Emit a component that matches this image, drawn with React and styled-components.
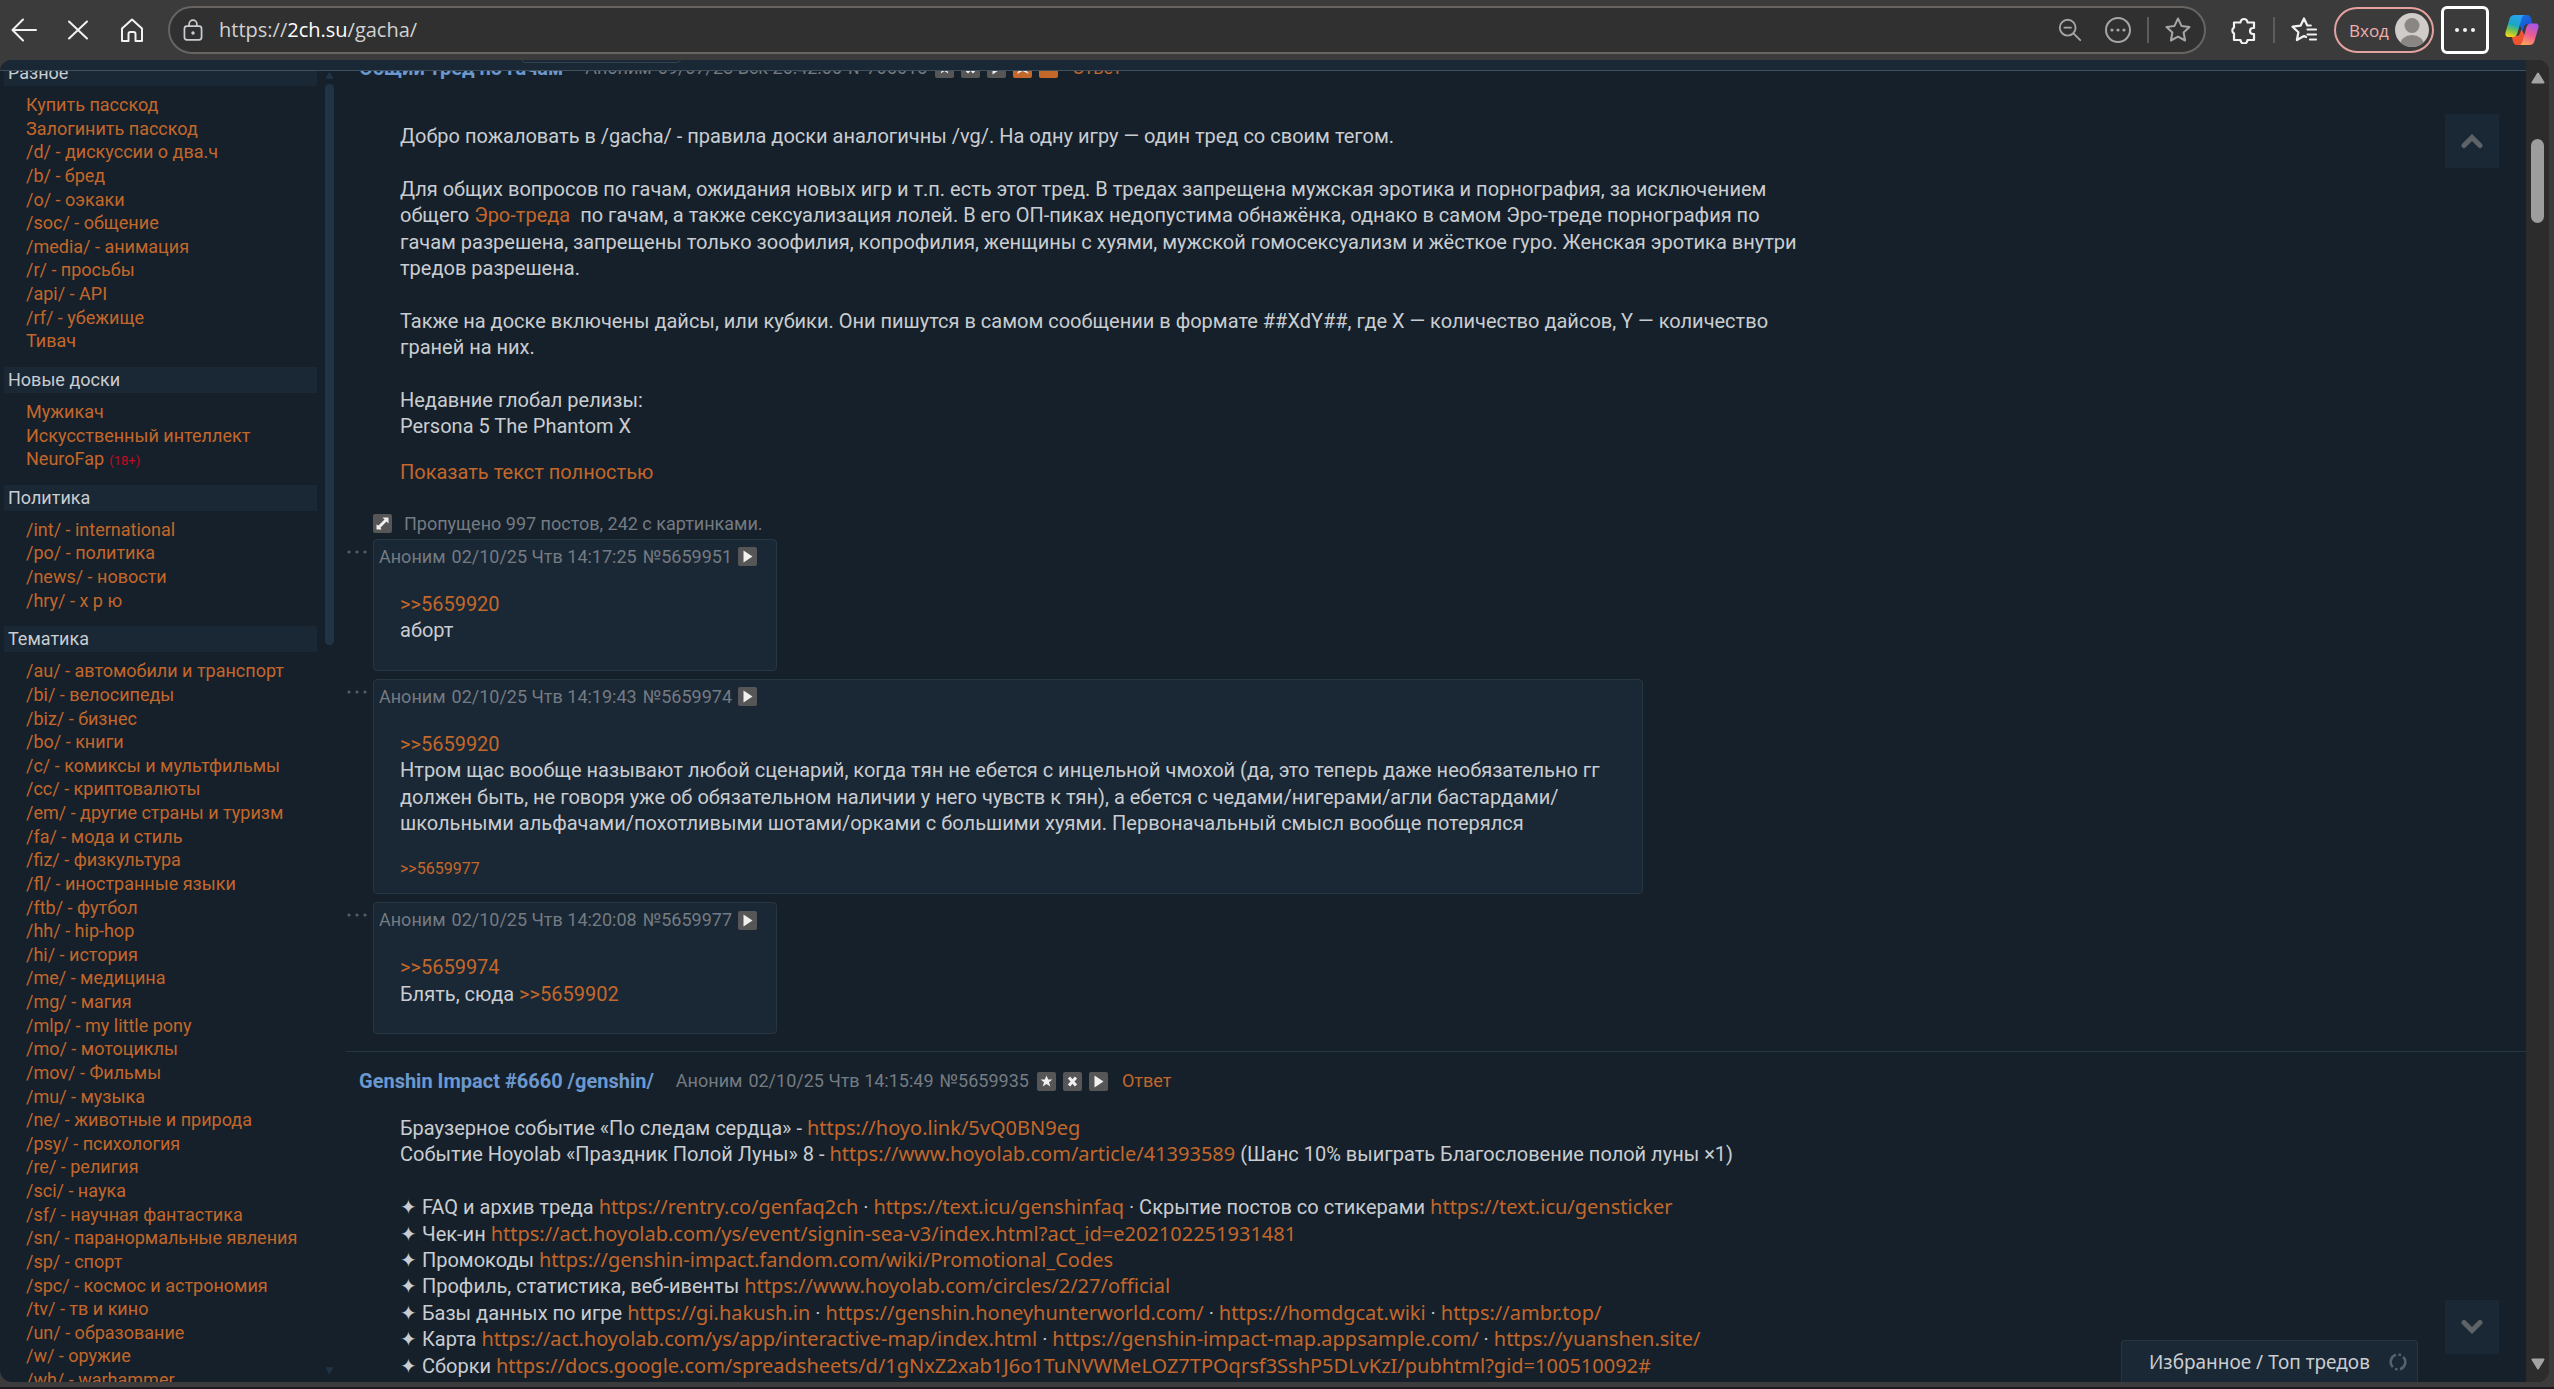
import React from "react";
import styled, { createGlobalStyle, css } from "styled-components";

const GlobalStyle = createGlobalStyle`
  * { box-sizing: border-box; }
  body {
    margin: 0;
    background: #1d1b20;
    color: #c9cdd1;
    font-family: Roboto, "Open Sans", sans-serif;
    font-size: 20px;
    line-height: 1.3125;
  }
  a { color: #c3672b; text-decoration: none; }
  button { font-family: inherit; cursor: pointer; }
  svg { display: block; }
`;

const line = "#263744";

/* ---------- browser ---------- */

const Window = styled.div`
  height: 100vh;
  display: flex;
  flex-direction: column;
  background: #3b3b3b;
  border-bottom: 2px solid #1d1b20;
`;

const Toolbar = styled.header`
  height: 60px;
  flex: none;
  display: flex;
  align-items: center;
  padding: 0 15px 0 6px;
`;

const Nav = styled.nav`
  display: flex;
  gap: 18px;
  margin-right: 18px;
`;

const IconButton = styled.button`
  width: 36px;
  height: 36px;
  padding: 0;
  border: 0;
  background: none;
  color: ${(props) => (props.$dim ? "#a6a6a6" : "#f2f2f2")};
  display: flex;
  align-items: center;
  justify-content: center;
`;

const AddressBar = styled.div`
  flex: 1;
  height: 48px;
  display: flex;
  align-items: center;
  padding: 0 8px 0 11px;
  border: 2px solid #676462;
  border-radius: 24px;
  background: #303030;
`;

const Address = styled.label`
  flex: 1;
  position: relative;
  display: flex;
  align-items: center;
  margin-left: 14px;
  font-family: "Open Sans", sans-serif;
  font-size: 20px;
  color: #d2d2d2;

  b {
    font-weight: 400;
    color: #ffffff;
  }
`;

const AddressInput = styled.input`
  position: absolute;
  inset: 0;
  width: 100%;
  border: 0;
  outline: 0;
  background: none;
  font: inherit;
  color: transparent;
`;

const PageActions = styled.div`
  display: flex;
  gap: 12px;
`;

const Separator = styled.span`
  width: 2px;
  height: 26px;
  margin: 0 11px;
  background: #5c5c5c;
`;

const Tools = styled.div`
  display: flex;
  align-items: center;
  margin-left: 20px;
`;

const SignIn = styled.button`
  width: 100px;
  height: 46px;
  margin: 0 7px 0 12px;
  padding: 0 3px 0 13px;
  display: flex;
  align-items: center;
  justify-content: space-between;
  border: 2px solid #e3a2a0;
  border-radius: 23px;
  background: none;
  color: #eeb0ae;
  font-family: "Open Sans", sans-serif;
  font-size: 17px;
`;

const MenuButton = styled(IconButton)`
  width: 48px;
  height: 48px;
  border: 3px solid #ffffff;
  border-radius: 6px;
`;

const Copilot = styled(IconButton)`
  width: 34px;
  margin-left: 16px;
`;

const Viewport = styled.div`
  position: relative;
  flex: 1;
  min-height: 0;
  margin: 0 5px 5px 0;
  display: flex;
  overflow: hidden;
  border-radius: 12px;
  background: #16202a;
`;

const PageScroll = styled.div`
  width: 23px;
  flex: none;
  display: flex;
  flex-direction: column;
  align-items: center;
  padding: 12px 0;
  background: #2c2c2c;
`;

const PageThumb = styled.div`
  width: 13px;
  height: 84px;
  margin: 55px 0 auto;
  border-radius: 7px;
  background: #9d9d9d;
`;

/* ---------- page ---------- */

const TopBar = styled.div`
  position: absolute;
  top: 0;
  left: 0;
  right: 23px;
  height: 11px;
  padding-left: 521px;
  overflow: hidden;
  z-index: 2;
  display: flex;
  align-items: flex-end;
  background: #1a2734;
  border-bottom: 1px solid #40505c;
`;

const BoardSelect = styled.select`
  width: 160px;
  height: 28px;
  margin-bottom: 7px;
  border: 1px solid #33434f;
  border-radius: 4px;
  background: #1a2734;
  color: #c9cdd1;
`;

const Sidebar = styled.aside`
  width: 346px;
  flex: none;
  display: flex;
  overflow: hidden;
`;

const Boards = styled.div`
  flex: 1;
  padding-left: 4px;
  font-size: 18px;
`;

const BoardTitle = styled.h2`
  margin: 0;
  padding-left: 4px;
  font-size: 18px;
  font-weight: 400;
  line-height: 26px;
  background: #1a2734;
`;

const BoardList = styled.ul`
  list-style: none;
  margin: 0;
  padding: 7px 0 14px 22px;
  white-space: nowrap;

  small {
    margin-left: 2px;
    font-size: 13px;
    color: #c20a22;
  }
`;

const SideScroll = styled.div`
  width: 9px;
  margin: 12px 12px 8px 8px;
  display: flex;
  flex-direction: column;
`;

const SideThumb = styled.div`
  height: 561px;
  margin: 5px 0 auto;
  border-radius: 5px;
  background: #213446;
`;

const Main = styled.main`
  flex: 1;
  min-width: 0;
  margin-top: -5px;
`;

const Thread = styled.section`
  padding-bottom: 17px;

  & + & {
    padding-top: 16px;
    border-top: 1px solid ${line};
  }
`;

const PostHead = styled.div`
  height: 26px;
  display: flex;
  align-items: center;
  gap: 6px;
  padding-left: ${(props) => (props.$op ? "13px" : "5px")};
  font-size: 18px;
  color: #747b82;
  white-space: nowrap;
`;

const Subject = styled.h3`
  margin: 0 16px 0 0;
  font-size: 20px;
  font-weight: 700;
  color: #6b98cf;
`;

const Marks = styled.span`
  display: flex;
  gap: 7px;
  margin: 0 8px 0 2px;
`;

const Mark = styled.button`
  width: 19px;
  height: 19px;
  padding: 0;
  display: flex;
  align-items: center;
  justify-content: center;
  border: 0;
  border-radius: 2px;
  color: #f0f0f0;
  background: ${(props) => (props.$hot ? "#c3672b" : "#565656")};
`;

const Message = styled.article`
  margin: 21px 42px 12px 26px;
  line-height: 1.32;

  a[href^="http"] {
    font-family: "Noto Sans", sans-serif;
    line-height: 1;
  }

  ${(props) =>
    props.$op &&
    css`
      margin-top: ${props.$space === "wide" ? "42px" : "21px"};
      margin-left: 54px;
      margin-bottom: 19px;
    `}
`;

const ShowAll = styled.a`
  display: block;
  width: fit-content;
  margin: 0 0 26px 54px;
`;

const Skipped = styled.div`
  height: 26px;
  display: flex;
  align-items: center;
  gap: 12px;
  margin: 0 0 2px 27px;
  font-size: 18px;
  color: #747b82;
`;

const Reply = styled.div`
  display: flex;
  align-items: flex-start;

  & + & {
    margin-top: 8px;
  }
`;

const Dots = styled.button`
  width: 27px;
  height: 26px;
  padding: 0 0 0 1px;
  border: 0;
  background: none;
  color: #56616b;
`;

const ReplyBox = styled.div`
  min-width: 404px;
  padding: 4px 0 14px;
  border: 1px solid ${line};
  border-radius: 4px;
  background: #1a2734;
`;

const Backlinks = styled.div`
  margin: 22px 0 0 26px;
  font-size: 16px;
`;

const Jump = styled.button`
  position: absolute;
  right: 50px;
  width: 54px;
  height: 54px;
  ${(props) => (props.$up ? "top: 54px;" : "bottom: 28px;")}
  display: flex;
  align-items: center;
  justify-content: center;
  border: 0;
  background: #1a2734;
  color: #5d6367;
`;

const Favorites = styled.button`
  position: absolute;
  right: 131px;
  bottom: 0;
  width: 297px;
  height: 42px;
  padding: 0 10px 0 27px;
  display: flex;
  align-items: center;
  justify-content: space-between;
  border: 1px solid ${line};
  border-bottom: 0;
  border-radius: 4px 4px 0 0;
  background: #1a2734;
  color: #c9cdd1;
  font-family: "Noto Sans", sans-serif;
  font-size: 19px;
`;

/* ---------- icons ---------- */

const Stroke = ({ size = 28, w = 2, children }) => (
  <svg width={size} height={size} viewBox="0 0 28 28" fill="none" stroke="currentColor" strokeWidth={w} strokeLinecap="round" strokeLinejoin="round">
    {children}
  </svg>
);

const STAR = "M14 2.5l3.5 7.4 8 1-5.9 5.6 1.5 8L14 20.600l-7.100 3.900 1.500-8-5.900-5.600 8-1z";

const BackIcon = () => <Stroke><path d="M26 14H3M13 3.500L2.500 14 13 24.500" /></Stroke>;
const StopIcon = () => <Stroke><path d="M5 5.500l18 17M23 5.500l-18 17" /></Stroke>;
const HomeIcon = () => (
  <Stroke><path d="M4 12.500L14 3.500l10 9V25h-6.500v-7a2 2 0 0 0-2-2h-3a2 2 0 0 0-2 2v7H4z" /></Stroke>
);
const LockIcon = () => (
  <Stroke size={24}>
    <rect x="4" y="9.500" width="20" height="16" rx="3" />
    <path d="M9.500 9.500V7a4.500 4.500 0 0 1 9 0v2.500" />
    <circle cx="14" cy="17.500" r="1" fill="currentColor" />
  </Stroke>
);
const ZoomOutIcon = () => (
  <Stroke size={26}><circle cx="11.500" cy="11.500" r="8.500" /><path d="M8 11.500h7M18 18l7 7" /></Stroke>
);
const MoreCircleIcon = () => (
  <Stroke>
    <circle cx="14" cy="14" r="12" />
    <g fill="currentColor" stroke="none"><circle cx="8" cy="14" r="1.600" /><circle cx="14" cy="14" r="1.600" /><circle cx="20" cy="14" r="1.600" /></g>
  </Stroke>
);
const StarIcon = () => <Stroke><path d={STAR} /></Stroke>;
const PuzzleIcon = () => (
  <Stroke w={2.200}>
    <path d="M4 6.500h6.500a3.500 3.500 0 1 1 7 0H24V12h-1a3 3 0 1 0 0 6h1v6h-6.500a3.500 3.500 0 0 1-7 0H4v-6.500a3.500 3.500 0 0 1 0-6z" />
  </Stroke>
);
const FavoritesIcon = () => (
  <Stroke w={2.200}>
    <path d="M16 21l-2-1-7.100 4 1.500-7.700-5.900-5.600 8-1L14 2.500l3.300 7h3.500M17.500 13.500H26M17.500 18.500H26M20 23.500h6" />
  </Stroke>
);
const DotsIcon = () => (
  <svg width="22" height="6" viewBox="0 0 22 6" fill="currentColor"><circle cx="3" cy="3" r="2" /><circle cx="11" cy="3" r="2" /><circle cx="19" cy="3" r="2" /></svg>
);
const DotsSmall = () => (
  <svg width="20" height="4" viewBox="0 0 20 4" fill="currentColor"><circle cx="2" cy="2" r="1.500" /><circle cx="10" cy="2" r="1.500" /><circle cx="18" cy="2" r="1.500" /></svg>
);
const Avatar = () => (
  <svg width="34" height="34" viewBox="0 0 34 34">
    <defs><clipPath id="face"><circle cx="17" cy="17" r="17" /></clipPath></defs>
    <g clipPath="url(#face)">
      <rect width="34" height="34" fill="#cfccc9" />
      <ellipse cx="17" cy="32" rx="12" ry="10" fill="#8a8683" />
      <circle cx="17" cy="12.500" r="7.500" fill="#8a8683" />
    </g>
  </svg>
);
const CopilotIcon = () => (
  <svg width="34" height="32" viewBox="0 0 34 32">
    <defs>
      <linearGradient id="cpA" x1="0.600" y1="0" x2="0.300" y2="1">
        <stop offset="0" stopColor="#2aa3f2" /><stop offset="0.450" stopColor="#18a6c4" />
        <stop offset="0.700" stopColor="#6fc254" /><stop offset="1" stopColor="#f4d516" />
      </linearGradient>
      <linearGradient id="cpB" x1="0.700" y1="0" x2="0.300" y2="1">
        <stop offset="0" stopColor="#a756e8" /><stop offset="0.500" stopColor="#ec5a92" /><stop offset="1" stopColor="#ffa35c" />
      </linearGradient>
      <linearGradient id="cpC" x1="0" y1="0" x2="1" y2="1">
        <stop offset="0" stopColor="#1c7ce8" /><stop offset="1" stopColor="#1a45cf" />
      </linearGradient>
    </defs>
    <path d="M10 1h12c2.500 0 3.400 1.600 4 3.500l1.500 5.500h-5c-2 0-3 1-3.600 3l-1.400 4z" fill="url(#cpC)" />
    <path d="M24 31H12c-2.500 0-3.400-1.600-4-3.500L6.500 22h5c2 0 3-1 3.600-3l1.400-4z" fill="#ee5430" />
    <path d="M10 1h10c-2 0-2.800 1.500-3.400 3.500l-4 14c-.700 2.500-2 4.500-4.600 4.500H3.500C.500 23 0 20.500.700 18L4.500 5C5.400 2 7 1 10 1z" fill="url(#cpA)" />
    <path d="M24 31H14c2 0 2.800-1.500 3.400-3.500l4-14C22.100 11 23.400 9.500 26 9.500h4.500c3 0 3.500 2 2.800 4.500l-3.800 13c-.900 3-2.500 4-5.500 4z" fill="url(#cpB)" />
  </svg>
);
const Triangle = ({ size = 14, fill = "#a3a3a3", down }) => (
  <svg width={size} height={size - 2} viewBox="0 0 14 12">
    <path d={down ? "M1.500 1.500h11L7 10.500z" : "M1.500 10.500h11L7 1.500z"} fill={fill} stroke={fill} strokeWidth="2" strokeLinejoin="round" />
  </svg>
);
const Chevron = ({ up }) => (
  <svg width="22" height="16" viewBox="0 0 22 16" fill="none" stroke="currentColor" strokeWidth="5" strokeLinecap="round">
    <path d={up ? "M3 12.500l8-8 8 8" : "M3 3.500l8 8 8-8"} />
  </svg>
);
const RefreshIcon = () => (
  <svg width="18" height="18" viewBox="0 0 18 18" fill="none" stroke="#56616b" strokeWidth="2.500">
    <path d="M7 1.800A7.500 7.500 0 0 0 3.800 14.200M11 16.200A7.500 7.500 0 0 0 14.200 3.800M9.500 1.500l2.500.600M8.500 16.500L6 15.900" />
  </svg>
);

const SHAPES = {
  star: <path d="M9.500 3.500l1.700 4h4.200l-3.400 2.700 1.300 4.300-3.800-2.500-3.800 2.500L7 10.200 3.600 7.500h4.200z" />,
  cross: <path d="M6 5.500l7 8M13 5.500l-7 8" stroke="currentColor" strokeWidth="3" />,
  play: <path d="M5.500 3.500l9 6-9 6z" />,
  pin: <path d="M6 4h7v7l3 4-6.500-3L4 15l2-4z" />,
  bar: <path d="M5 4h9v4H5z" />,
  expand: <path d="M9.500 3.500h6v6l-2-2-6 6 1 2h-5v-5l2 1 6-6z" />,
};
const MarkButton = ({ kind, label, hot }) => (
  <Mark type="button" aria-label={label} $hot={hot}>
    <svg width="19" height="19" viewBox="0 0 19 19" fill="currentColor">{SHAPES[kind]}</svg>
  </Mark>
);

/* ---------- data ---------- */

const boards = [
  {
    title: "Разное",
    items: ["Купить пасскод", "Залогинить пасскод", "/d/ - дискуссии о два.ч", "/b/ - бред", "/o/ - оэкаки", "/soc/ - общение", "/media/ - анимация", "/r/ - просьбы", "/api/ - API", "/rf/ - убежище", "Тивач"],
  },
  { title: "Новые доски", items: ["Мужикач", "Искусственный интеллект", "NeuroFap"] },
  { title: "Политика", items: ["/int/ - international", "/po/ - политика", "/news/ - новости", "/hry/ - х р ю"] },
  {
    title: "Тематика",
    items: [
      "/au/ - автомобили и транспорт", "/bi/ - велосипеды", "/biz/ - бизнес", "/bo/ - книги", "/c/ - комиксы и мультфильмы",
      "/cc/ - криптовалюты", "/em/ - другие страны и туризм", "/fa/ - мода и стиль", "/fiz/ - физкультура", "/fl/ - иностранные языки",
      "/ftb/ - футбол", "/hh/ - hip-hop", "/hi/ - история", "/me/ - медицина", "/mg/ - магия", "/mlp/ - my little pony",
      "/mo/ - мотоциклы", "/mov/ - Фильмы", "/mu/ - музыка", "/ne/ - животные и природа", "/psy/ - психология", "/re/ - религия",
      "/sci/ - наука", "/sf/ - научная фантастика", "/sn/ - паранормальные явления", "/sp/ - спорт", "/spc/ - космос и астрономия",
      "/tv/ - тв и кино", "/un/ - образование", "/w/ - оружие", "/wh/ - warhammer",
    ],
  },
];

const replies = [
  { id: "5659951", time: "14:17:25", lines: [">>5659920", "аборт"] },
  {
    id: "5659974",
    time: "14:19:43",
    lines: [
      ">>5659920",
      "Нтром щас вообще называют любой сценарий, когда тян не ебется с инцельной чмохой (да, это теперь даже необязательно гг",
      "должен быть, не говоря уже об обязательном наличии у него чувств к тян), а ебется с чедами/нигерами/агли бастардами/",
      "школьными альфачами/похотливыми шотами/орками с большими хуями. Первоначальный смысл вообще потерялся",
    ],
    refs: [">>5659977"],
  },
  { id: "5659977", time: "14:20:08", lines: [">>5659974", "Блять, сюда >>5659902"] },
];

const genshin = [
  "Браузерное событие «По следам сердца» - https://hoyo.link/5vQ0BN9eg",
  "Событие Hoyolab «Праздник Полой Луны» 8 - https://www.hoyolab.com/article/41393589 (Шанс 10% выиграть Благословение полой луны ×1)",
  "",
  "✦ FAQ и архив треда https://rentry.co/genfaq2ch · https://text.icu/genshinfaq · Скрытие постов со стикерами https://text.icu/gensticker",
  "✦ Чек-ин https://act.hoyolab.com/ys/event/signin-sea-v3/index.html?act_id=e202102251931481",
  "✦ Промокоды https://genshin-impact.fandom.com/wiki/Promotional_Codes",
  "✦ Профиль, статистика, веб-ивенты https://www.hoyolab.com/circles/2/27/official",
  "✦ Базы данных по игре https://gi.hakush.in · https://genshin.honeyhunterworld.com/ · https://homdgcat.wiki · https://ambr.top/",
  "✦ Карта https://act.hoyolab.com/ys/app/interactive-map/index.html · https://genshin-impact-map.appsample.com/ · https://yuanshen.site/",
  "✦ Сборки https://docs.google.com/spreadsheets/d/1gNxZ2xab1J6o1TuNVWMeLOZ7TPOqrsf3SshP5DLvKzI/pubhtml?gid=100510092#",
];

// turns urls and >>numbers into links
const Line = ({ text }) => (
  <>
    {text.split(/(https?:\S+|>>\d+)/).map((part, i) => (i % 2 ? <a key={i} href={part[0] === ">" ? "#" + part.slice(2) : part}>{part}</a> : part))}
    <br />
  </>
);

const App = () => {
  return (
    <Window>
      <GlobalStyle />
      <Toolbar>
        <Nav>
          <IconButton aria-label="Назад"><BackIcon /></IconButton>
          <IconButton aria-label="Остановить"><StopIcon /></IconButton>
          <IconButton aria-label="Домой"><HomeIcon /></IconButton>
        </Nav>
        <AddressBar>
          <LockIcon />
          <Address>
            <span>https://<b>2ch.su</b>/gacha/</span>
            <AddressInput aria-label="Адрес" />
          </Address>
          <PageActions>
            <IconButton $dim aria-label="Масштаб"><ZoomOutIcon /></IconButton>
            <IconButton $dim aria-label="Ещё"><MoreCircleIcon /></IconButton>
          </PageActions>
          <Separator />
          <IconButton $dim aria-label="В избранное"><StarIcon /></IconButton>
        </AddressBar>
        <Tools>
          <IconButton aria-label="Расширения"><PuzzleIcon /></IconButton>
          <Separator />
          <IconButton aria-label="Избранное"><FavoritesIcon /></IconButton>
          <SignIn>Вход<Avatar /></SignIn>
          <MenuButton aria-label="Меню"><DotsIcon /></MenuButton>
          <Copilot aria-label="Copilot"><CopilotIcon /></Copilot>
        </Tools>
      </Toolbar>

      <Viewport>
        <TopBar><BoardSelect aria-label="Доска" /></TopBar>

        <Sidebar>
          <Boards>
            {boards.map((group) => (
              <div key={group.title}>
                <BoardTitle>{group.title}</BoardTitle>
                <BoardList>
                  {group.items.map((item) => (
                    <li key={item}>
                      <a href="#">{item}</a>
                      {item === "NeuroFap" && <small> (18+)</small>}
                    </li>
                  ))}
                </BoardList>
              </div>
            ))}
          </Boards>
          <SideScroll>
            <Triangle size={9} fill="#213446" />
            <SideThumb />
            <Triangle size={9} fill="#213446" down />
          </SideScroll>
        </Sidebar>

        <Main>
          <Thread>
            <PostHead $op>
              <Subject>Общий тред по гачам</Subject>
              <span>Аноним</span>
              <span>09/07/23 Вск 20:42:06</span>
              <span>№705615</span>
              <Marks>
                <MarkButton kind="star" label="В избранное" />
                <MarkButton kind="cross" label="Скрыть" />
                <MarkButton kind="play" label="Меню поста" />
                <MarkButton kind="pin" label="Закреплён" hot />
                <MarkButton kind="bar" label="Бесконечный" hot />
              </Marks>
              <a href="#705615">Ответ</a>
            </PostHead>
            <Message $op $space="wide">
              Добро пожаловать в /gacha/ - правила доски аналогичны /vg/. На одну игру — один тред со своим тегом.<br />
              <br />
              Для общих вопросов по гачам, ожидания новых игр и т.п. есть этот тред. В тредах запрещена мужская эротика и порнография, за исключением<br />
              общего <a href="#ero">Эро-треда</a>&nbsp; по гачам, а также сексуализация лолей. В его ОП-пиках недопустима обнажёнка, однако в самом Эро-треде порнография по<br />
              гачам разрешена, запрещены только зоофилия, копрофилия, женщины с хуями, мужской гомосексуализм и жёсткое гуро. Женская эротика внутри<br />
              тредов разрешена.<br />
              <br />
              Также на доске включены дайсы, или кубики. Они пишутся в самом сообщении в формате ##XdY##, где X — количество дайсов, Y — количество<br />
              граней на них.<br />
              <br />
              Недавние глобал релизы:<br />
              Persona 5 The Phantom X
            </Message>
            <ShowAll href="#all">Показать текст полностью</ShowAll>
            <Skipped>
              <MarkButton kind="expand" label="Развернуть тред" />
              Пропущено 997 постов, 242 с картинками.
            </Skipped>
            {replies.map((post) => (
              <Reply key={post.id}>
                <Dots aria-label="Действия"><DotsSmall /></Dots>
                <ReplyBox>
                  <PostHead>
                    <span>Аноним</span>
                    <span>02/10/25 Чтв {post.time}</span>
                    <span>№{post.id}</span>
                    <MarkButton kind="play" label="Меню поста" />
                  </PostHead>
                  <Message>
                    {post.lines.map((text) => <Line key={text} text={text} />)}
                  </Message>
                  {post.refs && <Backlinks>{post.refs.map((text) => <Line key={text} text={text} />)}</Backlinks>}
                </ReplyBox>
              </Reply>
            ))}
          </Thread>

          <Thread>
            <PostHead $op>
              <Subject>Genshin Impact #6660 /genshin/</Subject>
              <span>Аноним</span>
              <span>02/10/25 Чтв 14:15:49</span>
              <span>№5659935</span>
              <Marks>
                <MarkButton kind="star" label="В избранное" />
                <MarkButton kind="cross" label="Скрыть" />
                <MarkButton kind="play" label="Меню поста" />
              </Marks>
              <a href="#5659935">Ответ</a>
            </PostHead>
            <Message $op>
              {genshin.map((text, i) => <Line key={i} text={text} />)}
            </Message>
          </Thread>
        </Main>

        <PageScroll>
          <Triangle />
          <PageThumb />
          <Triangle down />
        </PageScroll>

        <Jump $up aria-label="Наверх"><Chevron up /></Jump>
        <Jump aria-label="Вниз"><Chevron /></Jump>
        <Favorites>Избранное / Топ тредов<RefreshIcon /></Favorites>
      </Viewport>
    </Window>
  );
};

export default App;
